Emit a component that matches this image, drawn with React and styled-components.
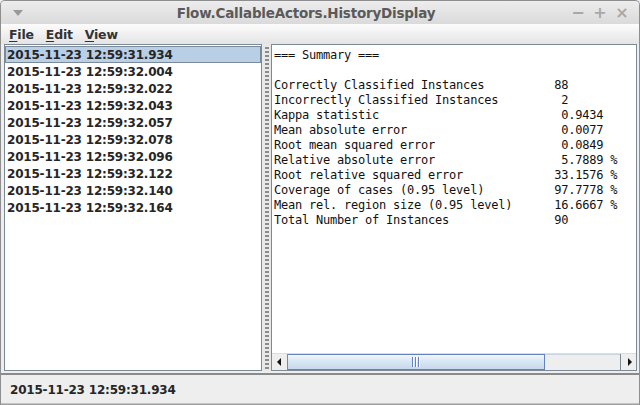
import React from "react";
import styled, { createGlobalStyle } from "styled-components";

const Global = createGlobalStyle`
  html, body { margin: 0; padding: 0; background: #eeeeee; overflow: hidden; }
  #root { width: 640px; height: 405px; }
`;

const Window = styled.div`
  width: 640px;
  height: 405px;
  box-sizing: border-box;
  display: flex;
  flex-direction: column;
  background: #eeeeee;
  border: 1px solid #8e8e8e;
  border-bottom-color: #a0a0a0;
  border-radius: 5px 5px 0 0;
  overflow: hidden;
  font-family: "DejaVu Sans", sans-serif;
`;

const TitleBar = styled.div`
  height: 23px;
  flex: none;
  display: flex;
  align-items: center;
  background: linear-gradient(#ededed, #dadada);
  color: #5a5a5a;
`;

const MenuIcon = styled.div`
  width: 0;
  height: 0;
  margin-left: 12px;
  border-left: 5px solid transparent;
  border-right: 5px solid transparent;
  border-top: 6px solid #9a9a9a;
`;

const Title = styled.div`
  flex: 1;
  text-align: center;
  font-weight: bold;
  font-size: 13.5px;
  letter-spacing: -0.2px;
  padding-left: 18px;
`;

const Controls = styled.div`
  display: flex;
  gap: 8px;
  margin-right: 10px;
`;

const Control = styled.span`
  width: 14px;
  text-align: center;
  font-size: 16px;
  font-weight: bold;
  color: #a8a8a8;
  line-height: 1;
`;

const MenuBar = styled.div`
  height: 20px;
  flex: none;
  display: flex;
  align-items: center;
  gap: 12px;
  padding-left: 8px;
  background: linear-gradient(#fcfcfc, #e4e4e4);
`;

const MenuItem = styled.span`
  font-size: 12.5px;
  font-weight: bold;
  color: #333333;
  letter-spacing: -0.2px;
  u { text-decoration: underline; text-underline-offset: 2px; }
`;

const Main = styled.div`
  height: 327px;
  flex: none;
  display: flex;
  padding: 0 2px 0 3px;
`;

const ListPanel = styled.div`
  width: 258px;
  box-sizing: border-box;
  border: 1px solid #7a8a99;
  background: #ffffff;
  padding-top: 1px;
`;

const Row = styled.div`
  height: 17px;
  box-sizing: border-box;
  padding: 1px 0 0 1px;
  font-size: 12px;
  font-weight: bold;
  line-height: 15px;
  letter-spacing: -0.2px;
  color: #262626;
  background: ${(p) => (p.selected ? "#b8cfe5" : "transparent")};
  border: 1px solid ${(p) => (p.selected ? "#7a8a99" : "transparent")};
`;

const Splitter = styled.div`
  width: 9px;
  flex: none;
  display: flex;
  justify-content: center;
  background: #e8e8e8;
`;

const Dots = styled.div`
  width: 4px;
  margin-top: 2px;
  background-image: radial-gradient(circle, #8a8a8a 0.7px, transparent 1px);
  background-size: 2px 4px;
`;

const RightPanel = styled.div`
  flex: 1;
  display: flex;
  flex-direction: column;
  box-sizing: border-box;
  border: 1px solid #7a8a99;
  background: #ffffff;
  min-width: 0;
`;

const TextArea = styled.pre`
  flex: 1;
  margin: 0;
  padding: 3px 0 0 2px;
  font-family: "DejaVu Sans Mono", monospace;
  font-size: 12px;
  letter-spacing: -0.22px;
  line-height: 15px;
  color: #111111;
  white-space: pre;
  overflow: hidden;
`;

const HScroll = styled.div`
  height: 16px;
  flex: none;
  display: flex;
  background: #eeeeee;
  border-top: 1px solid #dddddd;
`;

const ArrowBtn = styled.div`
  width: 16px;
  flex: none;
  display: flex;
  align-items: center;
  justify-content: center;
  box-sizing: border-box;
  background: #eeeeee;
  border-right: ${(p) => (p.left ? "1px solid #7a8a99" : "none")};
  border-left: ${(p) => (p.left ? "none" : "1px solid #7a8a99")};
  &::after {
    content: "";
    width: 0;
    height: 0;
    border-top: 4px solid transparent;
    border-bottom: 4px solid transparent;
    ${(p) =>
      p.left
        ? "border-right: 4px solid #111; margin-right: 2px;"
        : "border-left: 4px solid #111; margin-left: 2px;"}
  }
`;

const Track = styled.div`
  flex: 1;
  display: flex;
  background: #eeeeee;
  box-shadow: inset 0 1px 0 #c8d6e4;
`;

const Thumb = styled.div`
  width: 257px;
  box-sizing: border-box;
  border: 1px solid #6382bf;
  border-left: none;
  background: linear-gradient(#f4f8fc 0%, #ddeaf6 35%, #c6d8ea 100%);
  display: flex;
  align-items: center;
  justify-content: center;
  gap: 1px;
`;

const Grip = styled.span`
  width: 1px;
  height: 10px;
  background: #6382bf;
  box-shadow: 1px 0 0 #ffffff;
  margin-right: 1px;
`;

const StatusBar = styled.div`
  height: 31px;
  flex: none;
  box-sizing: border-box;
  padding: 8px 0 0 9px;
  margin-top: 2px;
  border-top: 2px solid #8a8a8a;
  border-bottom: 1px solid #c4c4c4;
  background: #eeeeee;
  font-size: 12px;
  line-height: 14px;
  font-weight: bold;
  letter-spacing: -0.2px;
  color: #262626;
`;

const times = [
  "2015-11-23 12:59:31.934",
  "2015-11-23 12:59:32.004",
  "2015-11-23 12:59:32.022",
  "2015-11-23 12:59:32.043",
  "2015-11-23 12:59:32.057",
  "2015-11-23 12:59:32.078",
  "2015-11-23 12:59:32.096",
  "2015-11-23 12:59:32.122",
  "2015-11-23 12:59:32.140",
  "2015-11-23 12:59:32.164",
];

const summary = `=== Summary ===

Correctly Classified Instances          88
Incorrectly Classified Instances         2
Kappa statistic                          0.9434
Mean absolute error                      0.0077
Root mean squared error                  0.0849
Relative absolute error                  5.7889 %
Root relative squared error             33.1576 %
Coverage of cases (0.95 level)          97.7778 %
Mean rel. region size (0.95 level)      16.6667 %
Total Number of Instances               90`;

export default function App() {
  return (
    <>
      <Global />
      <Window>
        <TitleBar>
          <MenuIcon />
          <Title>Flow.CallableActors.HistoryDisplay</Title>
          <Controls>
            <Control>−</Control>
            <Control>+</Control>
            <Control>×</Control>
          </Controls>
        </TitleBar>
        <MenuBar>
          <MenuItem><u>F</u>ile</MenuItem>
          <MenuItem><u>E</u>dit</MenuItem>
          <MenuItem><u>V</u>iew</MenuItem>
        </MenuBar>
        <Main>
          <ListPanel>
            {times.map((t, i) => (
              <Row key={t} selected={i === 0}>{t}</Row>
            ))}
          </ListPanel>
          <Splitter>
            <Dots />
          </Splitter>
          <RightPanel>
            <TextArea>{summary}</TextArea>
            <HScroll>
              <ArrowBtn left />
              <Track>
                <Thumb>
                  <Grip />
                  <Grip />
                  <Grip />
                </Thumb>
              </Track>
              <ArrowBtn />
            </HScroll>
          </RightPanel>
        </Main>
        <StatusBar>2015-11-23 12:59:31.934</StatusBar>
      </Window>
    </>
  );
}
